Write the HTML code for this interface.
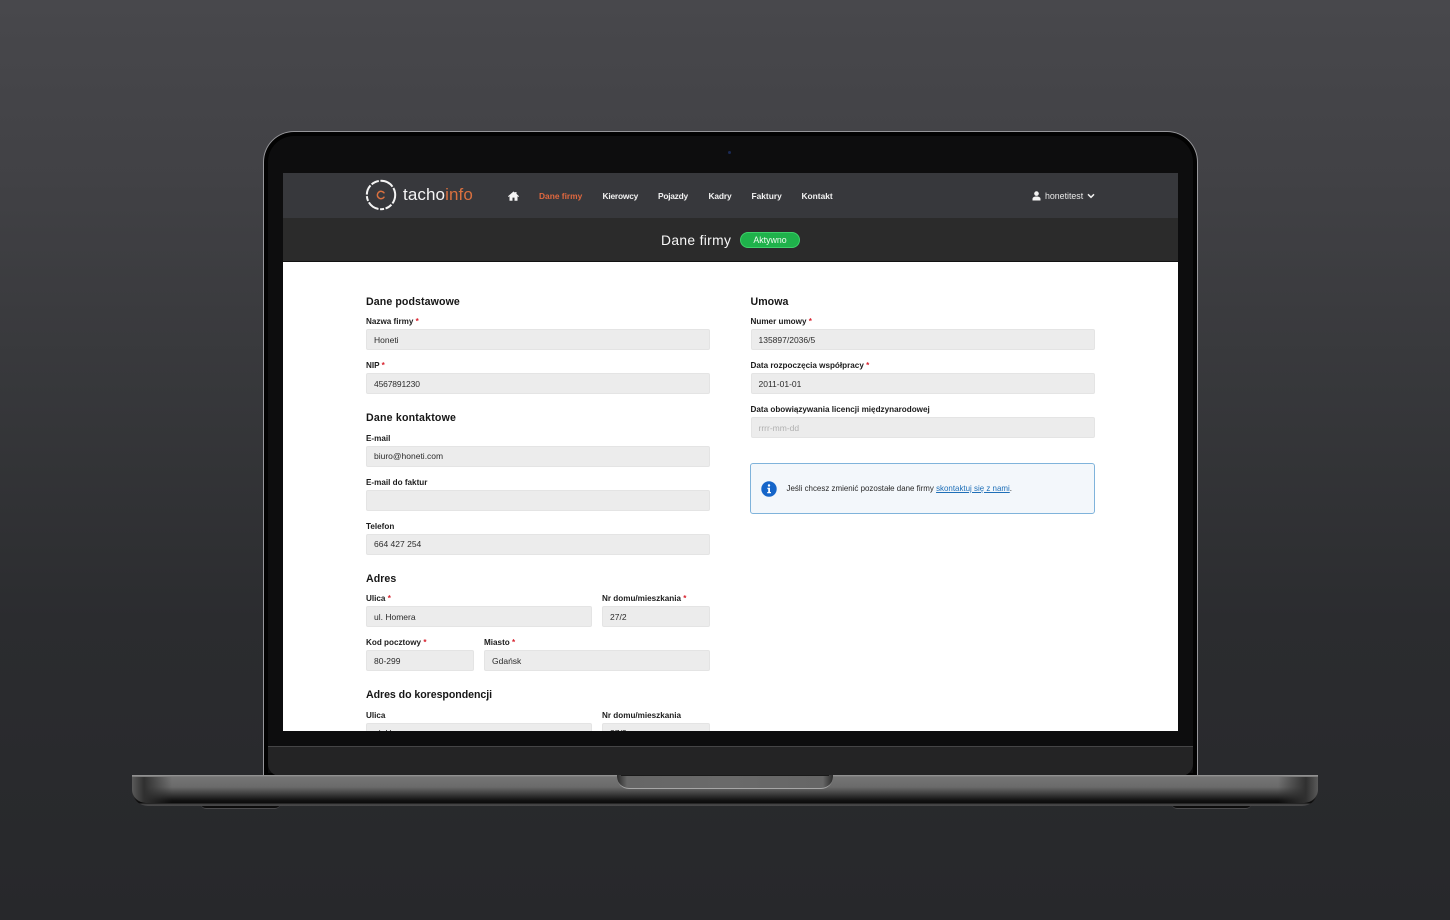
<!DOCTYPE html>
<html lang="pl"><head><meta charset="utf-8"><title>tachoinfo</title>
<style>
html,body{margin:0;padding:0}
body{width:1450px;height:920px;overflow:hidden;position:relative;background:linear-gradient(180deg,#48484c 0,#414145 180px,#36373a 400px,#2b2c2f 620px,#27282b 920px);font-family:"Liberation Sans",sans-serif}
div{position:absolute;box-sizing:border-box}
.t{white-space:nowrap;line-height:12px}
.h{font-size:10.6px;font-weight:bold;color:#161616;letter-spacing:.05px;line-height:14px;white-space:nowrap;position:absolute}
.l{font-size:8.15px;font-weight:bold;color:#1c1c1c;line-height:11px;white-space:nowrap;position:absolute}
.l i{color:#d8232f;font-style:normal}
.f{background:#ececec;border:1px solid #e4e4e4;border-radius:2px;height:21px;font-size:8.5px;line-height:19px;padding-left:7px;color:#2c2c2c;white-space:nowrap;position:absolute}
.g{line-height:21px}
.n{font-size:8.4px;font-weight:bold;color:#f2f2f2;line-height:12px;top:189.500px;white-space:nowrap;position:absolute}
</style></head><body>

<!-- lid -->
<div style="left:263px;top:131px;width:935px;height:646px;border-radius:31px 31px 0 0;background:#0d0d0e;border:1.5px solid #96969a;border-bottom:0;box-shadow:inset 0 0 0 4px #020202"></div>
<div style="left:728px;top:151px;width:3px;height:3px;border-radius:50%;background:#1b2a55"></div>

<!-- chin -->
<div style="left:268px;top:746px;width:925px;height:30px;background:#242425;border-top:1.5px solid #454546;border-radius:0 0 12px 12px"></div>

<!-- screen -->
<div style="left:283px;top:173px;width:894.500px;height:558px;background:#fff;overflow:hidden">
  <div style="left:0;top:0;width:895px;height:45px;background:#37383c"></div>
  <div style="left:0;top:45px;width:895px;height:43.500px;background:#2b2b2b;border-bottom:1px solid #111"></div>
</div>

<!-- header -->
<svg style="position:absolute;left:364px;top:178px" width="34" height="34" viewBox="0 0 34 34">
  <circle cx="17" cy="17" r="14.2" fill="none" stroke="#f4f4f4" stroke-width="2" stroke-dasharray="9 1.6 7 1.6 4 1.6 12 1.6 5 1.6 10 1.6 8 1.6 14 1.6"/>
  <path d="M20 14.800A3.700 3.700 0 1 0 20 19.200" fill="none" stroke="#d9703f" stroke-width="1.500" stroke-linecap="round"/>
</svg>
<div class="t" style="left:403px;top:185px;font-size:17px;line-height:20px;letter-spacing:.1px;color:#f4f4f4">tacho<span style="color:#d9703f">info</span></div>

<svg style="position:absolute;left:508px;top:190.500px" width="11" height="10" viewBox="0 0 11 10"><path d="M5.500.5 0 5.300l.6.7.9-.7V9.800h3V6.600h2V9.800h3V5.300l.9.7.6-.7L8.500 2.900V1H7.200v.8Z" fill="#f5f5f5"/></svg>
<span class="n" style="left:539px;color:#e0683f">Dane firmy</span>
<span class="n" style="left:602.500px;letter-spacing:-.2px">Kierowcy</span>
<span class="n" style="left:658px;letter-spacing:-.25px">Pojazdy</span>
<span class="n" style="left:708.500px;letter-spacing:-.15px">Kadry</span>
<span class="n" style="left:751.500px">Faktury</span>
<span class="n" style="left:801.500px">Kontakt</span>

<svg style="position:absolute;left:1032px;top:190.500px" width="9" height="10" viewBox="0 0 9 10"><circle cx="4.500" cy="2.600" r="2.300" fill="#f4f4f4"/><path d="M.5 9.500V8C.5 6.300 2 5.500 4.500 5.500S8.500 6.300 8.500 8v1.500Z" fill="#f4f4f4"/></svg>
<div class="t" style="left:1045px;top:190px;font-size:8.800px;color:#e8e8e8">honetitest</div>
<svg style="position:absolute;left:1087px;top:192.500px" width="8" height="6" viewBox="0 0 8 6"><path d="M1 1.300 4 4.300 7 1.300" fill="none" stroke="#f0f0f0" stroke-width="1.500"/></svg>

<div class="t" style="left:661px;top:232.500px;font-size:13.800px;line-height:16px;letter-spacing:.35px;color:#f7f7f7">Dane firmy</div>
<div style="left:740px;top:232px;width:60px;height:16px;border-radius:8px;background:#1fb24b;border:1px solid #3ed06a;color:#eefbf0;font-size:8.800px;line-height:14px;text-align:center;white-space:nowrap">Aktywno</div>

<!-- left column -->
<span class="h" style="left:366px;top:295px;letter-spacing:.1px">Dane podstawowe</span>
<span class="l" style="left:366px;top:316px">Nazwa firmy <i>*</i></span>
<div class="f g" style="left:366px;top:329px;width:344px">Honeti</div>
<span class="l" style="left:366px;top:360px">NIP <i>*</i></span>
<div class="f g" style="left:366px;top:373px;width:344px;letter-spacing:-.15px">4567891230</div>

<span class="h" style="left:366px;top:411px;letter-spacing:.2px">Dane kontaktowe</span>
<span class="l" style="left:366px;top:433px">E-mail</span>
<div class="f" style="left:366px;top:446px;width:344px">biuro@honeti.com</div>
<span class="l" style="left:366px;top:477px">E-mail do faktur</span>
<div class="f" style="left:366px;top:490px;width:344px"></div>
<span class="l" style="left:366px;top:521px">Telefon</span>
<div class="f" style="left:366px;top:534px;width:344px">664 427 254</div>

<span class="h" style="left:366px;top:572px">Adres</span>
<span class="l" style="left:366px;top:593px">Ulica <i>*</i></span>
<div class="f g" style="left:366px;top:606px;width:226px">ul. Homera</div>
<span class="l" style="left:602px;top:593px">Nr domu/mieszkania <i>*</i></span>
<div class="f g" style="left:602px;top:606px;width:108px">27/2</div>

<span class="l" style="left:366px;top:637px">Kod pocztowy <i>*</i></span>
<div class="f g" style="left:366px;top:650px;width:108px">80-299</div>
<span class="l" style="left:484px;top:637px">Miasto <i>*</i></span>
<div class="f g" style="left:484px;top:650px;width:226px">Gdańsk</div>

<span class="h" style="left:366px;top:688px;letter-spacing:-.05px">Adres do korespondencji</span>
<span class="l" style="left:366px;top:710px">Ulica</span>
<span class="l" style="left:602px;top:710px">Nr domu/mieszkania</span>
<div style="left:366px;top:723px;width:226px;height:8px;overflow:hidden"><div class="f" style="left:0;top:0;width:226px">ul. H</div></div>
<div style="left:602px;top:723px;width:108px;height:8px;overflow:hidden"><div class="f" style="left:0;top:0;width:108px">27/2</div></div>

<!-- right column -->
<span class="h" style="left:750.500px;top:295px">Umowa</span>
<span class="l" style="left:750.500px;top:316px">Numer umowy <i>*</i></span>
<div class="f g" style="left:750.500px;top:329px;width:344.500px">135897/2036/5</div>
<span class="l" style="left:750.500px;top:360px">Data rozpoczęcia współpracy <i>*</i></span>
<div class="f g" style="left:750.500px;top:373px;width:344.500px">2011-01-01</div>
<span class="l" style="left:750.500px;top:404px">Data obowiązywania licencji międzynarodowej</span>
<div class="f g" style="left:750.500px;top:417px;width:344.500px;color:#b0b0b0">rrrr-mm-dd</div>

<div style="left:750px;top:463px;width:345px;height:51px;background:#f3f7fb;border:1px solid #7fb3db;border-radius:3px"></div>
<svg style="position:absolute;left:761px;top:481px" width="16" height="16" viewBox="0 0 16 16"><circle cx="8" cy="8" r="7.700" fill="#1565c9"/><circle cx="8" cy="4.500" r="1.200" fill="#fff"/><path d="M6.400 6.800H9V11H10V12.300H6.200V11H7.200V8.100H6.400Z" fill="#fff"/></svg>
<div class="t" style="left:786.500px;top:483px;font-size:7.950px;color:#2a2a2a">Jeśli chcesz zmienić pozostałe dane firmy <span style="color:#1e6fb8;text-decoration:underline">skontaktuj się z nami</span>.</div>

<!-- base -->
<div style="left:201px;top:804px;width:79px;height:5px;background:#0c0c0c;border-bottom:1px solid #4a4a4c;border-radius:0 0 6px 6px"></div>
<div style="left:1172px;top:804px;width:79px;height:5px;background:#0c0c0c;border-bottom:1px solid #4a4a4c;border-radius:0 0 6px 6px"></div>
<div style="left:132px;top:775px;width:1186px;height:31px;border-radius:0 0 16px 16px;background:linear-gradient(180deg,#9a9a9a 0,#757575 2px,#6a6a6a 12px,#3c3c3c 19px,#141414 25px,#0a0a0a 28px,#3f3f40 29px,#4a4a4b 31px);overflow:hidden">
  <div style="left:0;top:2px;width:42px;height:26px;background:linear-gradient(90deg,#5a5a5a 0,#303030 12px,rgba(50,50,50,0) 40px);border-radius:0 0 0 14px"></div>
  <div style="right:0;top:2px;width:42px;height:26px;background:linear-gradient(270deg,#5a5a5a 0,#303030 12px,rgba(50,50,50,0) 40px);border-radius:0 0 14px 0"></div>
</div>
<!-- notch -->
<div style="left:617px;top:775px;width:216px;height:14px;background:linear-gradient(90deg,#2a2a2a 0,#666 10px,#6a6a6a 50%,#666 calc(100% - 10px),#2a2a2a 100%);border-bottom:1.500px solid #a6a6a6;border-radius:0 0 12px 12px"></div>
<div style="left:621px;top:775px;width:208px;height:1px;background:#1a1a1a"></div>
</body></html>
